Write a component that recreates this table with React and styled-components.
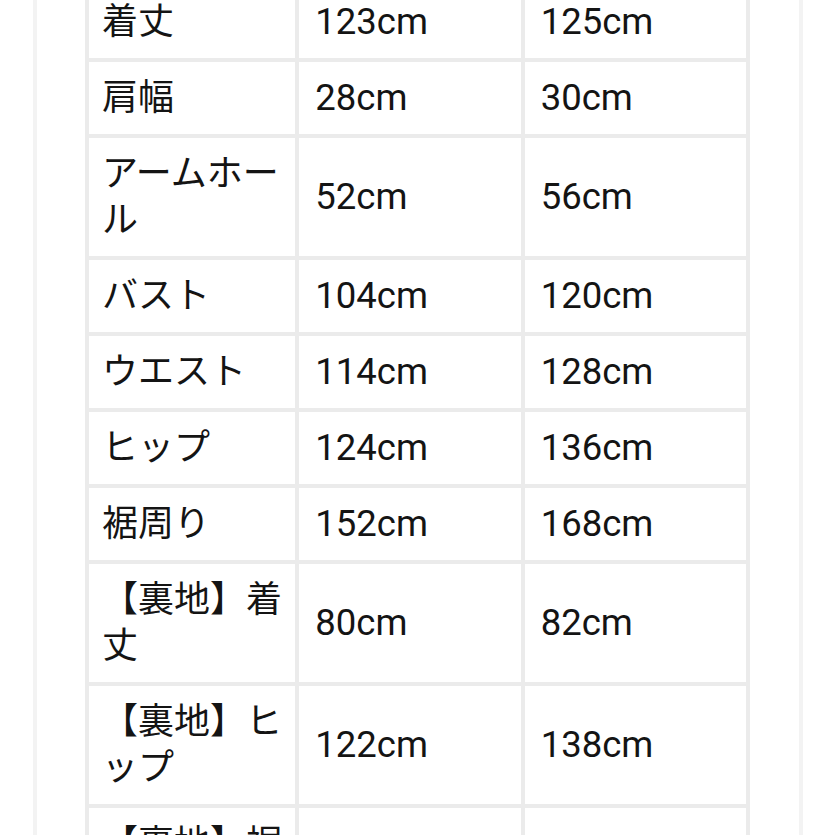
import React from "react";
import styled, { createGlobalStyle } from "styled-components";

const Global = createGlobalStyle`
  html, body {
    margin: 0;
    padding: 0;
    background: #ffffff;
    overflow: hidden;
  }
  body {
    font-family: Roboto, "Noto Sans CJK JP", sans-serif;
    color: #141414;
  }
`;

const Page = styled.div`
  height: 835px;
  overflow: hidden;
`;

const Frame = styled.div`
  margin-left: 33px;
  width: 770px;
  box-sizing: border-box;
  border-left: 4px solid #f3f3f3;
  border-right: 4px solid #f3f3f3;
  padding: 0 47px 0 48px;
  min-height: 900px;
`;

const Table = styled.table`
  margin-top: -18px;
  width: 665px;
  border-collapse: separate;
  border-spacing: 4px;
  background: #ebebeb;
  table-layout: fixed;
`;

const Cell = styled.td`
  background: #ffffff;
  padding: 13px 8px 13px ${(p) => (p.$value ? 16 : 13)}px;
  font-size: ${(p) => (p.$value ? 36.5 : 36)}px;
  line-height: 46px;
  vertical-align: middle;
  font-family: Roboto, "Noto Sans CJK JP", sans-serif;
  color: #141414;
  box-sizing: border-box;
`;

const rows = [
  ["着丈", "123cm", "125cm"],
  ["肩幅", "28cm", "30cm"],
  ["アームホール", "52cm", "56cm"],
  ["バスト", "104cm", "120cm"],
  ["ウエスト", "114cm", "128cm"],
  ["ヒップ", "124cm", "136cm"],
  ["裾周り", "152cm", "168cm"],
  ["【裏地】着丈", "80cm", "82cm"],
  ["【裏地】ヒップ", "122cm", "138cm"],
  ["【裏地】裾周り", "150cm", "166cm"],
];

export default function App() {
  return (
    <Page>
      <Global />
      <Frame>
        <Table>
          <colgroup>
            <col style={{ width: 206 }} />
            <col style={{ width: 221 }} />
            <col style={{ width: 221 }} />
          </colgroup>
          <tbody>
            {rows.map((r) => (
              <tr key={r[0]}>
                <Cell>{r[0]}</Cell>
                <Cell $value>{r[1]}</Cell>
                <Cell $value>{r[2]}</Cell>
              </tr>
            ))}
          </tbody>
        </Table>
      </Frame>
    </Page>
  );
}
